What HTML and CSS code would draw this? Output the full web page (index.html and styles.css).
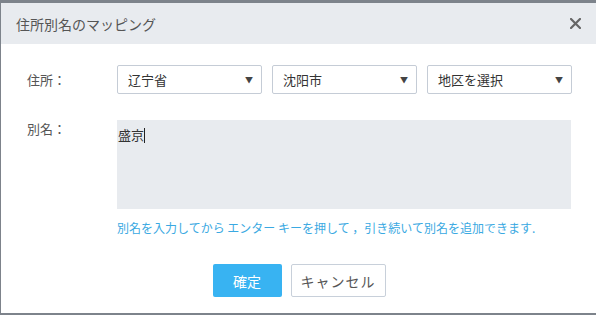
FILE: index.html
```html
<!DOCTYPE html>
<html lang="ja">
<head>
    <meta charset="UTF-8">
    <meta name="viewport" content="width=device-width, initial-scale=1.0">
    <title>住所別名のマッピング</title>
    <link rel="stylesheet" href="styles.css">
</head>
<body>

    <div class="dialog">
        <div class="dialog-header">
            <span class="dialog-title">住所別名のマッピング</span>
            <svg class="close" width="11" height="11" viewBox="0 0 11 11">
                <path d="M1 1 L10 10 M10 1 L1 10" stroke="#666" stroke-width="2.2" stroke-linecap="square"/>
            </svg>
        </div>

        <div class="dialog-body">
            <div class="form-row">
                <label class="form-label">住所：</label>
                <div class="selects">
                    <div class="select">
                        <span>辽宁省</span>
                        <span class="arrow">&#x25BC;</span>
                    </div>
                    <div class="select">
                        <span>沈阳市</span>
                        <span class="arrow">&#x25BC;</span>
                    </div>
                    <div class="select">
                        <span>地区を選択</span>
                        <span class="arrow">&#x25BC;</span>
                    </div>
                </div>
            </div>

            <div class="form-row alias-row">
                <label class="form-label">別名：</label>
                <div class="alias-box">
                    <div class="alias-area">盛京<span class="caret"></span></div>
                    <p class="hint">別名を入力してから エンター キーを押して ，引き続いて別名を追加できます.</p>
                </div>
            </div>

            <div class="actions">
                <button class="btn btn-primary">確定</button>
                <button class="btn btn-default">キャンセル</button>
            </div>
        </div>
    </div>

</body>
</html>
```

FILE: styles.css
```css
/* General Styling */
body {
    margin: 0;
    background: #7d838b;
    font-family: 'Noto Sans CJK JP', 'Noto Sans', sans-serif;
    height: 315px;
    overflow: hidden;
}

.dialog {
    margin: 3px 0 0 1px;
    height: 310px;
    background: #fff;
}

.dialog-header {
    height: 41px;
    background: #e8ebef;
    display: flex;
    align-items: center;
    justify-content: space-between;
    padding: 0 15px 0 15px;
}

.dialog-title {
    font-size: 14px;
    color: #555;
}

.dialog-body {
    padding: 21px 25px 0 26px;
}

.form-row {
    display: flex;
}

.form-label {
    width: 89px;
    flex-shrink: 0;
    font-size: 13px;
    color: #555;
    line-height: 29px;
}

.selects {
    display: flex;
    gap: 10px;
    margin-left: 1px;
}

.select {
    width: 145px;
    height: 29px;
    box-sizing: border-box;
    border: 1px solid #c5ccd6;
    border-radius: 2px;
    display: flex;
    align-items: center;
    justify-content: space-between;
    padding: 0 8px 0 10px;
    font-size: 13px;
    color: #333;
}

.arrow {
    font-size: 8px;
    color: #444;
}

.alias-row {
    margin-top: 26px;
}

.alias-row .form-label {
    line-height: 18px;
}

.alias-box {
    width: 455px;
    margin-left: 1px;
}

.alias-area {
    height: 89px;
    background: #e8ebef;
    font-size: 13px;
    color: #333;
    padding: 6px 1px;
    box-sizing: border-box;
    line-height: 18px;
}

.caret {
    display: inline-block;
    width: 1px;
    height: 15px;
    background: #222;
    vertical-align: -3px;
}

.hint {
    margin: 10px 0 0 0;
    font-size: 12px;
    color: #3aa9e2;
}

.actions {
    display: flex;
    justify-content: center;
    gap: 9px;
    margin-top: 28px;
}

.btn {
    height: 33px;
    font-family: inherit;
    font-size: 14px;
    border-radius: 2px;
    cursor: pointer;
}

.btn-primary {
    width: 69px;
    border: none;
    background: #38b3f2;
    color: #fff;
}

.btn-default {
    width: 95px;
    border: 1px solid #c8d0da;
    background: #fff;
    color: #555;
    letter-spacing: 1px;
}
```
